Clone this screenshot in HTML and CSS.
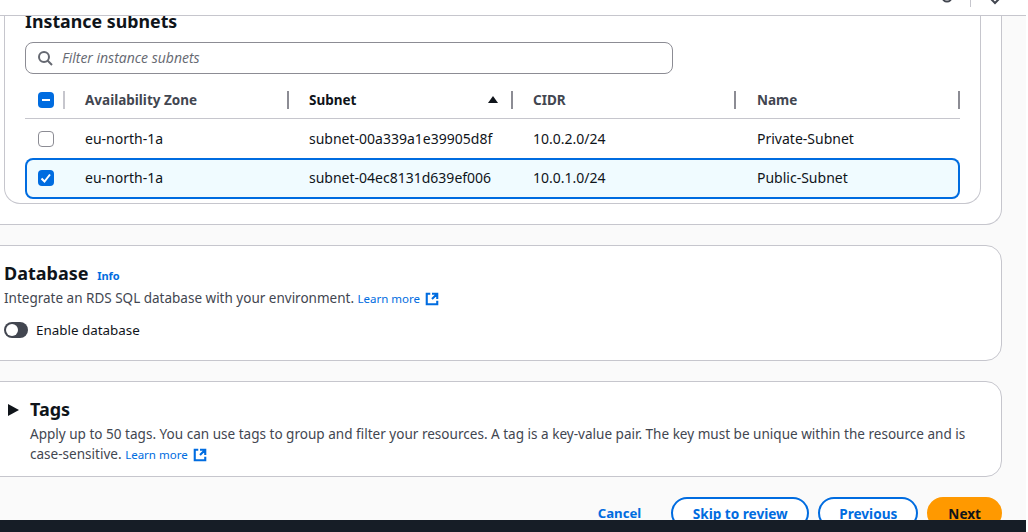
FILE: index.html
```html
<!DOCTYPE html>
<html lang="en">
<head>
    <meta charset="UTF-8">
    <meta name="viewport" content="width=device-width, initial-scale=1.0">
    <title>Configure networking, database, and tags</title>
    <link rel="stylesheet" href="styles.css">
</head>
<body>
    <div class="page">
        <header class="topbar">
            <svg class="topbar-icon" width="12" height="12" viewBox="0 0 12 12"><circle cx="6" cy="-3" r="4.5"/></svg>
            <span class="topbar-divider"></span>
            <svg class="topbar-icon topbar-icon-last" width="12" height="12" viewBox="0 0 12 12"><path d="M1-2 6 3l5-5"/></svg>
        </header>
        <main class="content">
            <section class="card card-outer">
                <div class="card-inner">
                    <h3 class="subnets-title">Instance subnets</h3>
                    <div class="filter">
                        <svg class="icon" width="16" height="16" viewBox="0 0 16 16"><circle cx="7" cy="7" r="5"/><path d="m15 15-4.5-4.5"/></svg>
                        <span>Filter instance subnets</span>
                    </div>
                    <div class="table">
                        <div class="row row-head">
                            <div class="th th-check"><span class="checkbox checked"><svg width="16" height="16" viewBox="0 0 16 16"><path d="M4 8h8"/></svg></span></div>
                            <div class="th">Availability Zone</div>
                            <div class="th th-sorted">Subnet<svg class="caret" width="12" height="12" viewBox="0 0 12 12"><path d="M6 2 11 9H1z"/></svg></div>
                            <div class="th th-cidr">CIDR</div>
                            <div class="th">Name</div>
                        </div>
                        <div class="row">
                            <div class="td td-check"><span class="checkbox"></span></div>
                            <div class="td">eu-north-1a</div>
                            <div class="td">subnet-00a339a1e39905d8f</div>
                            <div class="td">10.0.2.0/24</div>
                            <div class="td">Private-Subnet</div>
                        </div>
                        <div class="row row-selected">
                            <div class="td td-check"><span class="checkbox checked"><svg width="16" height="16" viewBox="0 0 16 16"><path d="m3.5 8.5 3 3 5.5-7"/></svg></span></div>
                            <div class="td">eu-north-1a</div>
                            <div class="td">subnet-04ec8131d639ef006</div>
                            <div class="td">10.0.1.0/24</div>
                            <div class="td">Public-Subnet</div>
                        </div>
                    </div>
                </div>
            </section>

            <section class="card card-database">
                <h2 class="card-title">Database <a class="info" href="#">Info</a></h2>
                <p class="card-desc">Integrate an RDS SQL database with your environment. <a class="learn" href="#">Learn more <svg class="external" width="14" height="14" viewBox="0 0 16 16"><path d="M14 8.01v-6H8M14.02 2 8 8M6 2H2v12h12v-4"/></svg></a></p>
                <div class="toggle-row">
                    <span class="toggle"></span>
                    <span>Enable database</span>
                </div>
            </section>

            <section class="card card-tags">
                <svg class="expand" width="11" height="12" viewBox="0 0 11 12"><path d="M0 0 11 6 0 12z"/></svg>
                <div>
                    <h2 class="card-title">Tags</h2>
                    <p class="card-desc card-desc-tags">Apply up to 50 tags. You can use tags to group and filter your resources. A tag is a key-value pair. The key must be unique within the resource and is case-sensitive. <a class="learn" href="#">Learn more <svg class="external" width="14" height="14" viewBox="0 0 16 16"><path d="M14 8.01v-6H8M14.02 2 8 8M6 2H2v12h12v-4"/></svg></a></p>
                </div>
            </section>

            <div class="actions">
                <a class="btn-link" href="#">Cancel</a>
                <button class="btn btn-skip">Skip to review</button>
                <button class="btn btn-prev">Previous</button>
                <button class="btn btn-next">Next</button>
            </div>
        </main>
        <footer class="footer"></footer>
    </div>
</body>
</html>
```

FILE: styles.css
```css
* {
    box-sizing: border-box;
}

body {
    margin: 0;
    background-color: #ffffff;
    font-family: "Noto Sans", "Open Sans", sans-serif;
    font-size: 14px;
    line-height: 20px;
    color: #0f141a;
}

a {
    text-decoration: none;
    color: #006ce0;
}

svg {
    fill: none;
    stroke: currentColor;
    stroke-width: 2;
}

.page {
    width: 1026px;
    height: 532px;
    display: flex;
    flex-direction: column;
    overflow: hidden;
    background-color: #fafafa;
}

.topbar {
    flex: 0 0 16px;
    display: flex;
    justify-content: flex-end;
    align-items: flex-start;
    background-color: #ffffff;
    border-bottom: 1px solid #c6c6cd;
    color: #424650;
}

.topbar-divider {
    width: 1px;
    height: 7px;
    margin: 0 18px 0 17px;
    background-color: #c6c6cd;
}

.topbar-icon-last {
    margin-right: 25px;
}

.content {
    flex: 1;
    min-height: 0;
    overflow: hidden;
    padding-right: 24px;
}

.card {
    background-color: #ffffff;
    border: 1px solid #c6c6cd;
    border-radius: 16px;
    margin-left: -21px;
}

.card-outer {
    height: 215px;
    margin-top: -6px;
    padding-right: 20px;
    border-top: none;
    border-top-left-radius: 0;
    border-top-right-radius: 0;
}

.card-inner {
    height: 194px;
    margin-left: 24px;
    padding: 0 20px;
    border: 1px solid #c6c6cd;
    border-top: none;
    border-top-left-radius: 0;
    border-top-right-radius: 0;
    border-bottom-left-radius: 16px;
    border-bottom-right-radius: 16px;
}

.subnets-title {
    margin: 0;
    font-size: 17.8px;
    line-height: 22px;
    font-weight: 700;
}

.filter {
    width: 648px;
    height: 32px;
    margin-top: 10px;
    padding: 0 11px;
    display: flex;
    align-items: center;
    gap: 9px;
    border: 1px solid #8c8c94;
    border-radius: 8px;
    color: #656871;
    font-family: "Open Sans", "Noto Sans", sans-serif;
    font-size: 14px;
    font-style: italic;
}

.filter .icon {
    color: #656871;
}

.table {
    margin-top: 11px;
}

.row {
    display: grid;
    grid-template-columns: 60px 224px 224px 224px 203px;
    align-items: center;
    height: 39px;
}

.row-head {
    height: 34px;
    padding-bottom: 4px;
    border-bottom: 1px solid #c6c6cd;
    color: #424650;
    font-size: 13.5px;
    font-weight: 700;
}

.row-selected {
    height: 41px;
    padding-bottom: 1px;
    background-color: #f0fbff;
    border-radius: 8px;
    box-shadow: inset 0 0 0 2px #006ce0;
}

.th {
    height: 18px;
    margin-right: 20px;
    display: flex;
    align-items: center;
    justify-content: space-between;
    border-right: 2px solid #8c8c94;
}

.th:last-child {
    margin-right: 0;
}

.th-check {
    padding-left: 13px;
    border-right-color: #c6c6cd;
}

.th-cidr {
    margin-right: 21px;
}

.th-sorted {
    color: #0f141a;
    padding-right: 12px;
}

.caret {
    fill: #0f141a;
    stroke: none;
}

.td-check {
    padding-left: 13px;
    display: flex;
    align-items: center;
}

.checkbox {
    width: 16px;
    height: 16px;
    display: block;
    border: 1px solid #8c8c94;
    border-radius: 4px;
    background-color: #ffffff;
    color: #ffffff;
}

.checkbox.checked {
    border: none;
    background-color: #006ce0;
}

.checkbox svg {
    display: block;
}

.card-database {
    height: 116px;
    margin-top: 20px;
    padding: 15px 0 0 24px;
}

.card-title {
    margin: 0;
    font-size: 18px;
    line-height: 24px;
    font-weight: 700;
}

.info {
    margin-left: 4px;
    font-size: 11px;
    font-weight: 700;
}

.card-desc {
    margin: 0;
    font-size: 13.5px;
    line-height: 20px;
    color: #424650;
}

.card-desc-tags {
    margin-top: 3px;
    font-size: 13.55px;
}

.learn {
    font-size: 11.5px;
}

.external {
    vertical-align: -3px;
    margin-left: 2px;
    stroke-width: 2.4;
}

.toggle-row {
    margin-top: 11px;
    display: flex;
    align-items: center;
    gap: 8px;
    font-size: 13.4px;
}

.toggle {
    width: 24px;
    height: 16px;
    padding: 2px;
    border-radius: 8px;
    background-color: #424650;
}

.toggle::before {
    content: "";
    display: block;
    width: 12px;
    height: 12px;
    border-radius: 50%;
    background-color: #ffffff;
}

.card-tags {
    height: 96px;
    margin-top: 20px;
    padding: 15px 24px 0 28px;
    display: flex;
    gap: 11px;
}

.expand {
    flex: none;
    margin-top: 7px;
    fill: #0f141a;
    stroke: none;
}

.actions {
    margin-top: 20px;
    display: flex;
    justify-content: flex-end;
    align-items: center;
    gap: 9px;
}

.btn-link {
    margin-right: 21px;
    font-size: 13.2px;
    font-weight: 700;
}

.btn {
    height: 32px;
    padding: 0 19px;
    border: 2px solid #006ce0;
    border-radius: 20px;
    background-color: #ffffff;
    color: #006ce0;
    font-family: inherit;
    font-size: 13.6px;
    font-weight: 700;
}

.btn-skip {
    padding: 0 19.5px;
}

.btn-next {
    border-color: #ff9900;
    background-color: #ff9900;
    color: #0f141a;
}

.footer {
    flex: 0 0 12px;
    background-color: #161d26;
}
```
